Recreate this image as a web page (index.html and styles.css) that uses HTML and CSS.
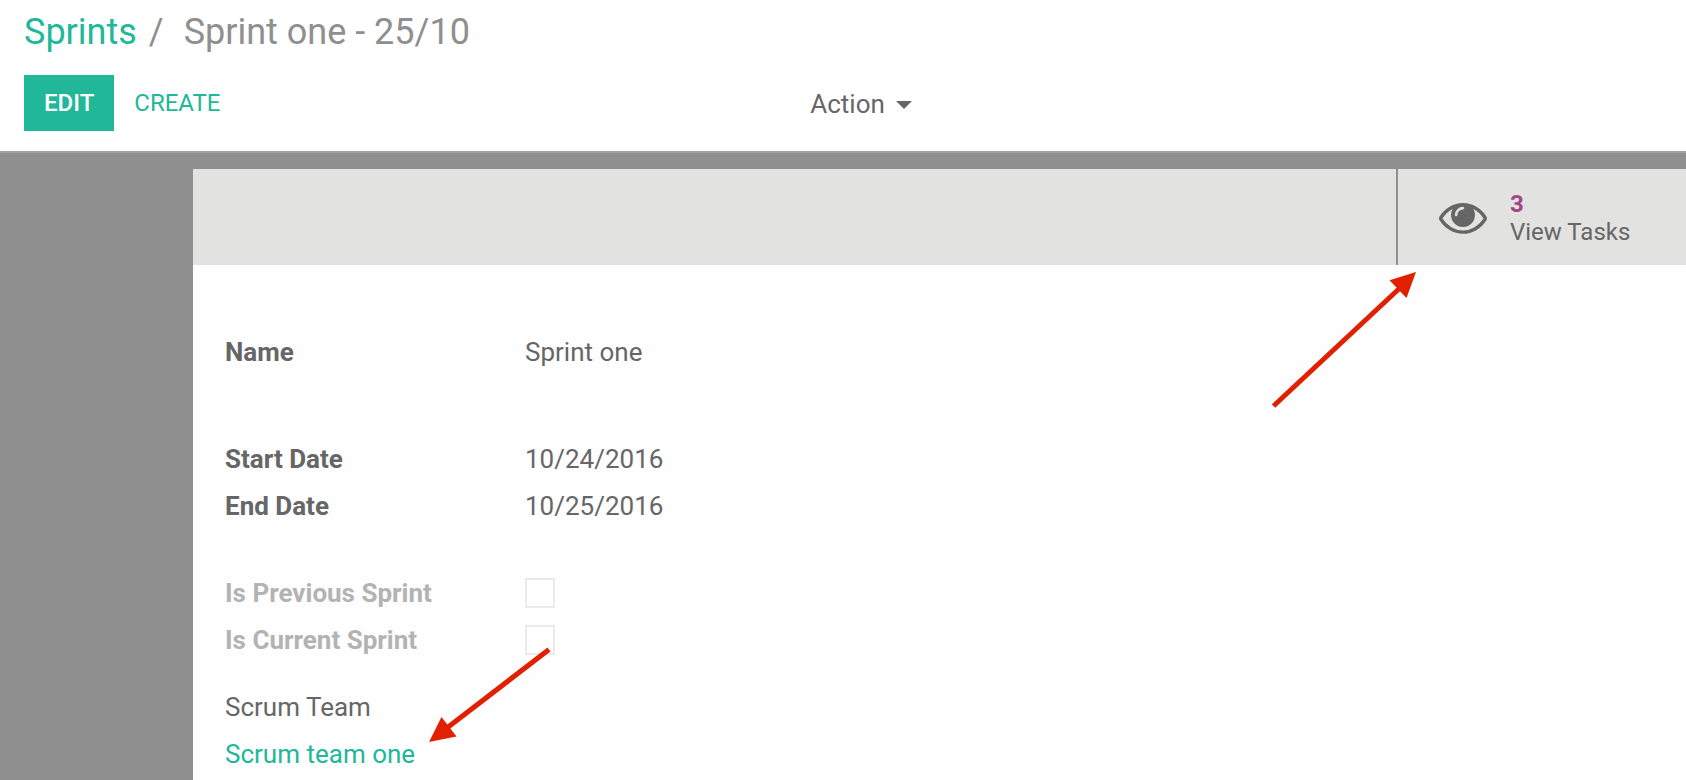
FILE: index.html
```html
<!DOCTYPE html>
<html lang="en">
<head>
<meta charset="utf-8">
<title>Sprint one - 25/10</title>
<link rel="stylesheet" href="styles.css">
</head>
<body>
<header class="control-panel">
  <nav class="breadcrumb" aria-label="Breadcrumb">
    <a class="breadcrumb-link" href="#">Sprints</a>
    <span class="breadcrumb-separator">/</span>
    <span>Sprint one - 25/10</span>
  </nav>
  <div class="toolbar">
    <div class="toolbar-buttons">
      <button class="button button-primary" type="button">EDIT</button>
      <button class="button button-link" type="button">CREATE</button>
    </div>
    <button class="action-menu" type="button">Action <span class="caret"></span></button>
  </div>
</header>
<main class="form-view">
  <section class="sheet">
    <div class="stat-bar">
      <button class="stat-button" type="button">
        <svg class="stat-icon" viewBox="0 384 1792 1152" aria-hidden="true"><path d="M1664 960q-152-236-381-353 61 104 61 225 0 185-131.500 316.500t-316.500 131.500-316.500-131.500-131.500-316.500q0-121 61-225-229 117-381 353 133 205 333.500 326.500t434.500 121.500 434.500-121.500 333.500-326.500zm-720-384q0-20-14-34t-34-14q-125 0-214.500 89.500t-89.500 214.500q0 20 14 34t34 14 34-14 14-34q0-86 61-147t147-61q20 0 34-14t14-34zm848 384q0 34-20 69-140 230-376.500 368.500t-499.500 138.500-499.500-139-376.500-368q-20-35-20-69t20-69q140-229 376.500-368t499.500-139 499.500 139 376.500 368q20 35 20 69z"/></svg>
        <span class="stat-text"><strong class="stat-value">3</strong><span>View Tasks</span></span>
      </button>
    </div>
    <div class="sheet-body">
      <dl class="group group-name">
        <dt>Name</dt><dd>Sprint one</dd>
      </dl>
      <dl class="group group-dates">
        <dt>Start Date</dt><dd>10/24/2016</dd>
        <dt>End Date</dt><dd>10/25/2016</dd>
      </dl>
      <div class="group group-flags">
        <label for="previous">Is Previous Sprint</label><input class="checkbox" id="previous" type="checkbox" disabled>
        <label for="current">Is Current Sprint</label><input class="checkbox" id="current" type="checkbox" disabled>
      </div>
      <div class="team">
        <span>Scrum Team</span>
        <a class="team-link" href="#">Scrum team one</a>
      </div>
    </div>
    <svg class="arrow arrow-tasks" width="150" height="144" viewBox="0 0 150 144" aria-hidden="true"><path d="M3.500 138L132 18" stroke-width="5"/><path class="arrow-head" d="M146 4L119.500 12.300 136.500 30z"/></svg>
    <svg class="arrow arrow-team" width="130" height="104" viewBox="0 0 130 104" aria-hidden="true"><path d="M124 4.500L18 86" stroke-width="5"/><path class="arrow-head" d="M4 97L16.500 72 31.500 91.500z"/></svg>
  </section>
</main>
</body>
</html>
```
FILE: styles.css
```css
* {
  box-sizing: border-box;
}

body {
  margin: 0;
  min-height: 100vh;
  display: flex;
  flex-direction: column;
  background: #fff;
  color: #666;
  font-family: Roboto, "Liberation Sans", sans-serif;
  font-size: 26px;
  line-height: 37px;
}

a {
  color: #21b799;
  text-decoration: none;
}

button {
  margin: 0;
  border: 0;
  background: none;
  color: inherit;
  font: inherit;
  cursor: pointer;
}

.control-panel {
  padding: 8px 24px 20px;
  border-bottom: 2px solid #a2a2a2;
}

.breadcrumb {
  display: flex;
  color: #8f8f8f;
  font-size: 36px;
  line-height: 48px;
}

.breadcrumb-separator {
  padding: 0 20px 0 12px;
}

.toolbar {
  display: grid;
  grid-template-columns: 48% 1fr;
  align-items: center;
  margin-top: 19px;
}

.toolbar-buttons {
  display: flex;
}

.button {
  padding: 10px 20px;
  font-size: 24px;
  line-height: 36px;
}

.button-primary {
  background: #21b799;
  color: #fff;
  font-weight: 500;
}

.button-link {
  color: #21b799;
}

.action-menu {
  justify-self: start;
  display: flex;
  align-items: center;
  gap: 11px;
  padding: 2px 0 0;
}

.caret {
  margin-top: 2px;
  border: 8px solid transparent;
  border-top-color: #666;
  border-bottom: 0;
}

.form-view {
  flex: 1;
  display: flex;
  padding: 16px 0 0 193px;
  background: #8f8f8f;
}

.sheet {
  position: relative;
  flex: 1;
  background: #fefefe;
}

.stat-bar {
  display: flex;
  justify-content: flex-end;
  background: #e2e2e0;
}

.stat-button {
  display: flex;
  align-items: center;
  gap: 23px;
  width: 290px;
  height: 96px;
  padding: 2px 0 0 41px;
  border-left: 2px solid #8f8f8f;
  font-size: 24px;
  line-height: 28px;
  text-align: left;
}

.stat-icon {
  width: 48px;
  overflow: visible;
  fill: #666;
}

.stat-text {
  display: flex;
  flex-direction: column;
}

.stat-value {
  color: #a24689;
}

.sheet-body {
  display: flex;
  flex-direction: column;
  padding: 69px 32px 0;
}

.group {
  display: grid;
  grid-template-columns: 300px 1fr;
  row-gap: 10px;
  margin: 0;
}

.group dt {
  font-weight: 700;
}

.group dd {
  margin: 0;
}

.group-name {
  margin-bottom: 70px;
}

.group-dates {
  margin-bottom: 50px;
}

.group-flags {
  align-items: start;
  margin-bottom: 30px;
  color: #b3b3b3;
  font-weight: 700;
}

.checkbox {
  appearance: none;
  width: 30px;
  height: 30px;
  margin: 3px 0;
  border: 2px solid #ebebeb;
  background: #fff;
}

.team {
  display: flex;
  flex-direction: column;
  align-items: flex-start;
  gap: 10px;
}

.arrow {
  position: absolute;
  stroke: #e12000;
  pointer-events: none;
}

.arrow-head {
  fill: #e12000;
  stroke: none;
}

.arrow-tasks {
  top: 99px;
  right: 266px;
}

.arrow-team {
  top: 476px;
  left: 232px;
}
```
